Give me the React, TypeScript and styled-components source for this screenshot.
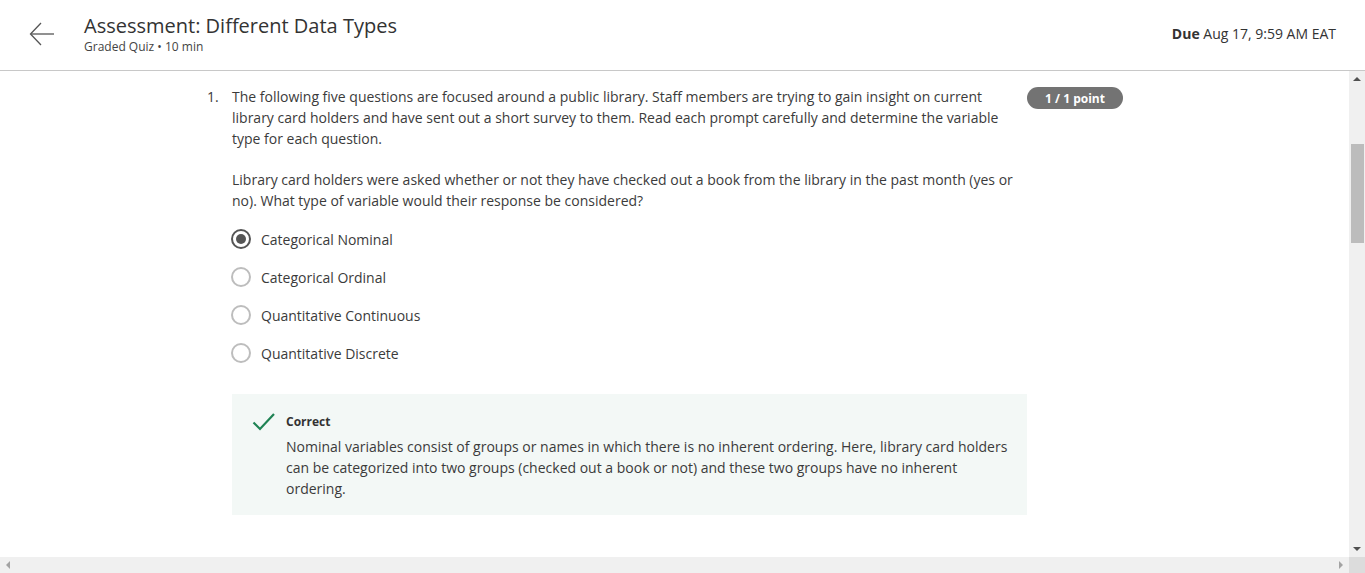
import React from "react";
import styled, { createGlobalStyle } from "styled-components";

const Global = createGlobalStyle`
  html, body { margin: 0; padding: 0; height: 100%; overflow: hidden; background: #fff; }
  body { font-family: "Open Sans", "Noto Sans", sans-serif; color: #3b3b3b; }
  #root { height: 100%; }
`;

const Page = styled.div`
  width: 1365px;
  height: 573px;
  display: flex;
  flex-direction: column;
`;

const Header = styled.header`
  height: 70px;
  border-bottom: 1px solid #c8c8c8;
  display: flex;
  align-items: center;
  padding: 0 29px 0 28px;
  box-sizing: content-box;
  flex-shrink: 0;
`;

const BackButton = styled.button`
  width: 28px;
  height: 28px;
  border: 0;
  background: none;
  padding: 0;
  display: flex;
  align-items: center;
  justify-content: center;
  margin-right: 28px;
  margin-top: -2px;
`;

const TitleBlock = styled.div`
  display: flex;
  flex-direction: column;
  flex: 1;
  margin-top: -3px;
`;

const Title = styled.h1`
  margin: 0;
  font-size: 20px;
  font-weight: 400;
  line-height: 26px;
  color: #333;
`;

const Subtitle = styled.div`
  font-size: 12px;
  line-height: 16px;
  color: #444;
  margin-top: 0;
`;

const Due = styled.div`
  font-size: 14px;
  color: #333;
  margin-top: -4px;
  b { font-weight: 700; }
`;

const Body = styled.div`
  flex: 1;
  display: flex;
  min-height: 0;
`;

const Content = styled.main`
  flex: 1;
  padding: 15px 0 0 207px;
  overflow: hidden;
`;

const VScroll = styled.div`
  width: 16px;
  background: #f0f0f0;
  display: flex;
  flex-direction: column;
  align-items: center;
`;

const Arrow = styled.div<{ dir: "up" | "down" | "left" | "right"; light?: boolean }>`
  width: 0;
  height: 0;
  ${({ dir, light }) => {
    const c = light ? "#a3a3a3" : "#505050";
    if (dir === "up") return `border-left:4px solid transparent;border-right:4px solid transparent;border-bottom:4px solid ${c};`;
    if (dir === "down") return `border-left:4px solid transparent;border-right:4px solid transparent;border-top:4px solid ${c};`;
    if (dir === "left") return `border-top:4px solid transparent;border-bottom:4px solid transparent;border-right:4px solid ${c};`;
    return `border-top:4px solid transparent;border-bottom:4px solid transparent;border-left:4px solid ${c};`;
  }}
`;

const ArrowCell = styled.div`
  width: 16px;
  height: 16px;
  display: flex;
  align-items: center;
  justify-content: center;
  flex-shrink: 0;
`;

const Track = styled.div`
  flex: 1;
  width: 100%;
  padding-top: 57px;
  display: flex;
  justify-content: center;
`;

const Thumb = styled.div`
  width: 13px;
  height: 99px;
  margin-left: 1px;
  background: #bcbcbc;
`;

const HScroll = styled.div`
  height: 16px;
  display: flex;
  background: #f0f0f0;
  flex-shrink: 0;
`;

const HTrack = styled.div`
  flex: 1;
`;

const Corner = styled.div`
  width: 16px;
  background: #dcdcdc;
`;

const QuestionRow = styled.div`
  display: flex;
  align-items: flex-start;
`;

const Number = styled.div`
  width: 25px;
  font-size: 14px;
  line-height: 21px;
`;

const QuestionBody = styled.div`
  width: 795px;
`;

const Paragraph = styled.p`
  margin: 0 0 20px;
  font-size: 14px;
  line-height: 21px;
  width: 785px;
`;

const Badge = styled.div`
  width: 96px;
  height: 22px;
  margin-top: 1px;
  border-radius: 11px;
  background: #737373;
  color: #fff;
  font-size: 12px;
  font-weight: 700;
  display: flex;
  align-items: center;
  justify-content: center;
`;

const Options = styled.div`
  margin-top: -11px;
  display: flex;
  flex-direction: column;
`;

const Option = styled.label`
  height: 38px;
  display: flex;
  align-items: center;
  font-size: 14px;
  color: #3b3b3b;
`;

const Radio = styled.span<{ checked?: boolean }>`
  width: 20px;
  height: 20px;
  box-sizing: border-box;
  border-radius: 50%;
  border: ${({ checked }) => (checked ? "2px solid #555" : "2px solid #bdbdbd")};
  margin: 0 10px 0 -1px;
  display: flex;
  align-items: center;
  justify-content: center;
  &::after {
    content: "";
    display: ${({ checked }) => (checked ? "block" : "none")};
    width: 10px;
    height: 10px;
    border-radius: 50%;
    background: #555;
  }
`;

const Feedback = styled.div`
  margin-top: 22px;
  width: 795px;
  box-sizing: border-box;
  background: #f3f8f6;
  padding: 19px 12px 16px 20px;
  display: flex;
  align-items: flex-start;
`;

const CheckWrap = styled.div`
  width: 24px;
  margin-right: 10px;
  margin-top: -1px;
`;

const FeedbackText = styled.div`
  flex: 1;
`;

const FeedbackTitle = styled.div`
  font-size: 12px;
  font-weight: 700;
  line-height: 18px;
  color: #333;
  margin-bottom: 5px;
`;

const FeedbackBody = styled.div`
  font-size: 14px;
  line-height: 21px;
`;

const options = [
  "Categorical Nominal",
  "Categorical Ordinal",
  "Quantitative Continuous",
  "Quantitative Discrete",
];

export default function App() {
  return (
    <Page>
      <Global />
      <Header>
        <BackButton aria-label="Back">
          <svg width="26" height="26" viewBox="0 0 26 26" fill="none" stroke="#555" strokeWidth="1.3">
            <path d="M25 13H2" />
            <path d="M12 2L1.5 13L12 24" />
          </svg>
        </BackButton>
        <TitleBlock>
          <Title>Assessment: Different Data Types</Title>
          <Subtitle>Graded Quiz • 10 min</Subtitle>
        </TitleBlock>
        <Due>
          <b>Due</b> Aug 17, 9:59 AM EAT
        </Due>
      </Header>
      <Body>
        <Content>
          <QuestionRow>
            <Number>1.</Number>
            <QuestionBody>
              <Paragraph>
                The following five questions are focused around a public library. Staff members are trying to gain
                insight on current library card holders and have sent out a short survey to them. Read each prompt
                carefully and determine the variable type for each question.
              </Paragraph>
              <Paragraph>
                Library card holders were asked whether or not they have checked out a book from the library in the
                past month (yes or no). What type of variable would their response be considered?
              </Paragraph>
              <Options>
                {options.map((o, i) => (
                  <Option key={o}>
                    <Radio checked={i === 0} />
                    {o}
                  </Option>
                ))}
              </Options>
              <Feedback>
                <CheckWrap>
                  <svg width="24" height="20" viewBox="0 0 24 20" fill="none" stroke="#1f8354" strokeWidth="2.2">
                    <path d="M1.5 10.5L8 17L22 2" />
                  </svg>
                </CheckWrap>
                <FeedbackText>
                  <FeedbackTitle>Correct</FeedbackTitle>
                  <FeedbackBody>
                    Nominal variables consist of groups or names in which there is no inherent ordering. Here, library
                    card holders can be categorized into two groups (checked out a book or not) and these two groups
                    have no inherent ordering.
                  </FeedbackBody>
                </FeedbackText>
              </Feedback>
            </QuestionBody>
            <Badge>1 / 1 point</Badge>
          </QuestionRow>
        </Content>
        <VScroll>
          <ArrowCell>
            <Arrow dir="up" />
          </ArrowCell>
          <Track>
            <Thumb />
          </Track>
          <ArrowCell>
            <Arrow dir="down" />
          </ArrowCell>
        </VScroll>
      </Body>
      <HScroll>
        <ArrowCell>
          <Arrow dir="left" light />
        </ArrowCell>
        <HTrack />
        <ArrowCell>
          <Arrow dir="right" light />
        </ArrowCell>
        <Corner />
      </HScroll>
    </Page>
  );
}
